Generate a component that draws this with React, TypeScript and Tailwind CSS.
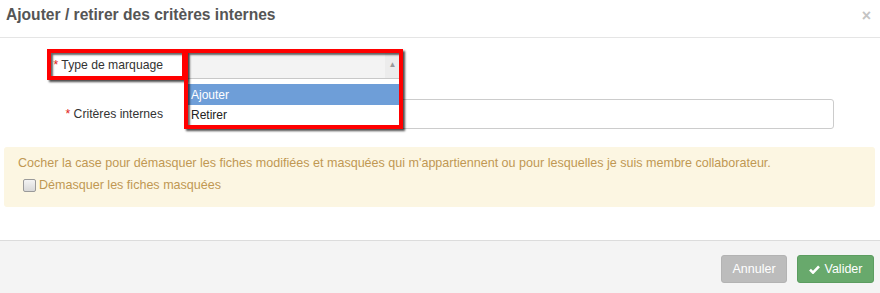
import React from "react";

const App: React.FC = () => {
  return (
    <div className="relative w-[880px] h-[293px] bg-white font-['Liberation_Sans',Arial,sans-serif] text-[12px] text-[#333] overflow-hidden">
      {/* Header */}
      <div className="h-[38px] border-b border-[#e5e5e5] flex items-center justify-between pl-[6px] pr-[9px]">
        <h3 className="text-[15.6px] font-bold text-[#555] leading-none -mt-[7px]">
          Ajouter / retirer des critères internes
        </h3>
        <span className="text-[#c4c4c4] text-[16px] font-bold leading-none -mt-[5px]">×</span>
      </div>

      {/* Body */}
      <div className="pt-[14px]">
        <div className="flex items-center h-[27px]">
          <label className="w-[188px] pr-[25px] text-right text-[12.2px] text-[#333]">
            <span className="text-[#e02020]">*</span> Type de marquage
          </label>
          <div className="relative w-[212px] h-[27px] z-10">
            <div className="h-full bg-[#f3f3f3] border-b border-[#c8c8c8] flex justify-end">
              <div className="w-[15px] h-full bg-[#ececec] flex items-center justify-center text-[#999] text-[8px]">
                ▲
              </div>
            </div>
            <ul className="absolute left-0 top-[28px] w-full bg-white pt-[4px] pb-[2px]">
              <li className="h-[21px] flex items-center px-[3px] bg-[#6e9ed8] text-white">Ajouter</li>
              <li className="h-[20px] flex items-center px-[3px] text-[#222]">Retirer</li>
            </ul>
          </div>
        </div>

        <div className="flex items-center h-[30px] mt-[20px]">
          <label className="w-[188px] pr-[25px] text-right text-[12.2px] text-[#333]">
            <span className="text-[#e02020]">*</span> Critères internes
          </label>
          <input
            type="text"
            className="w-[646px] h-[30px] border border-[#ccc] rounded-[3px] bg-white"
          />
        </div>

        <div className="mt-[18px] ml-[4px] mr-[5px] h-[60px] bg-[#fcf6e2] rounded-[3px] px-[14px] pt-[8px] text-[#c09853] text-[12.55px]">
          <p className="leading-[17px]">
            Cocher la case pour démasquer les fiches modifiées et masquées qui m'appartiennent ou pour lesquelles je suis membre collaborateur.
          </p>
          <label className="flex items-center gap-[3px] mt-[5px] ml-[5px] leading-[17px]">
            <span className="w-[13px] h-[13px] rounded-[2px] border border-[#9a9a9a] bg-gradient-to-b from-[#f4f4f4] to-[#d8d8d8]" />
            Démasquer les fiches masquées
          </label>
        </div>
      </div>

      {/* Footer */}
      <div className="absolute left-0 right-0 bottom-0 h-[53px] border-t border-[#dcdcdc] bg-[#f4f4f4] flex justify-end items-start gap-[10px] pt-[14px] pr-[6px]">
        <button className="w-[66px] h-[28px] rounded-[3px] bg-[#bcbcbc] border border-[#b3b3b3] text-white text-[12.5px]">
          Annuler
        </button>
        <button className="w-[77px] h-[28px] rounded-[3px] bg-[#68a96c] border border-[#5c9d60] text-white text-[12.5px] flex items-center justify-center gap-[5px]">
          <svg width="11" height="9" viewBox="0 0 11 9" aria-hidden="true">
            <path d="M1 4.6 L4 7.6 L10 1.4" fill="none" stroke="white" strokeWidth="2.6" />
          </svg>
          Valider
        </button>
      </div>

      {/* Annotation frames */}
      <div className="absolute left-[47px] top-[49px] w-[139px] h-[31px] border-[4px] border-[#ff0000] shadow-[2px_2px_2px_rgba(0,0,0,0.7),inset_2px_2px_2px_rgba(0,0,0,0.6)] z-20" />
      <div className="absolute left-[184px] top-[49px] w-[219px] h-[80px] border-[4px] border-[#ff0000] shadow-[2px_2px_2px_rgba(0,0,0,0.7),inset_2px_2px_2px_rgba(0,0,0,0.6)] z-20" />
    </div>
  );
};

export default App;
